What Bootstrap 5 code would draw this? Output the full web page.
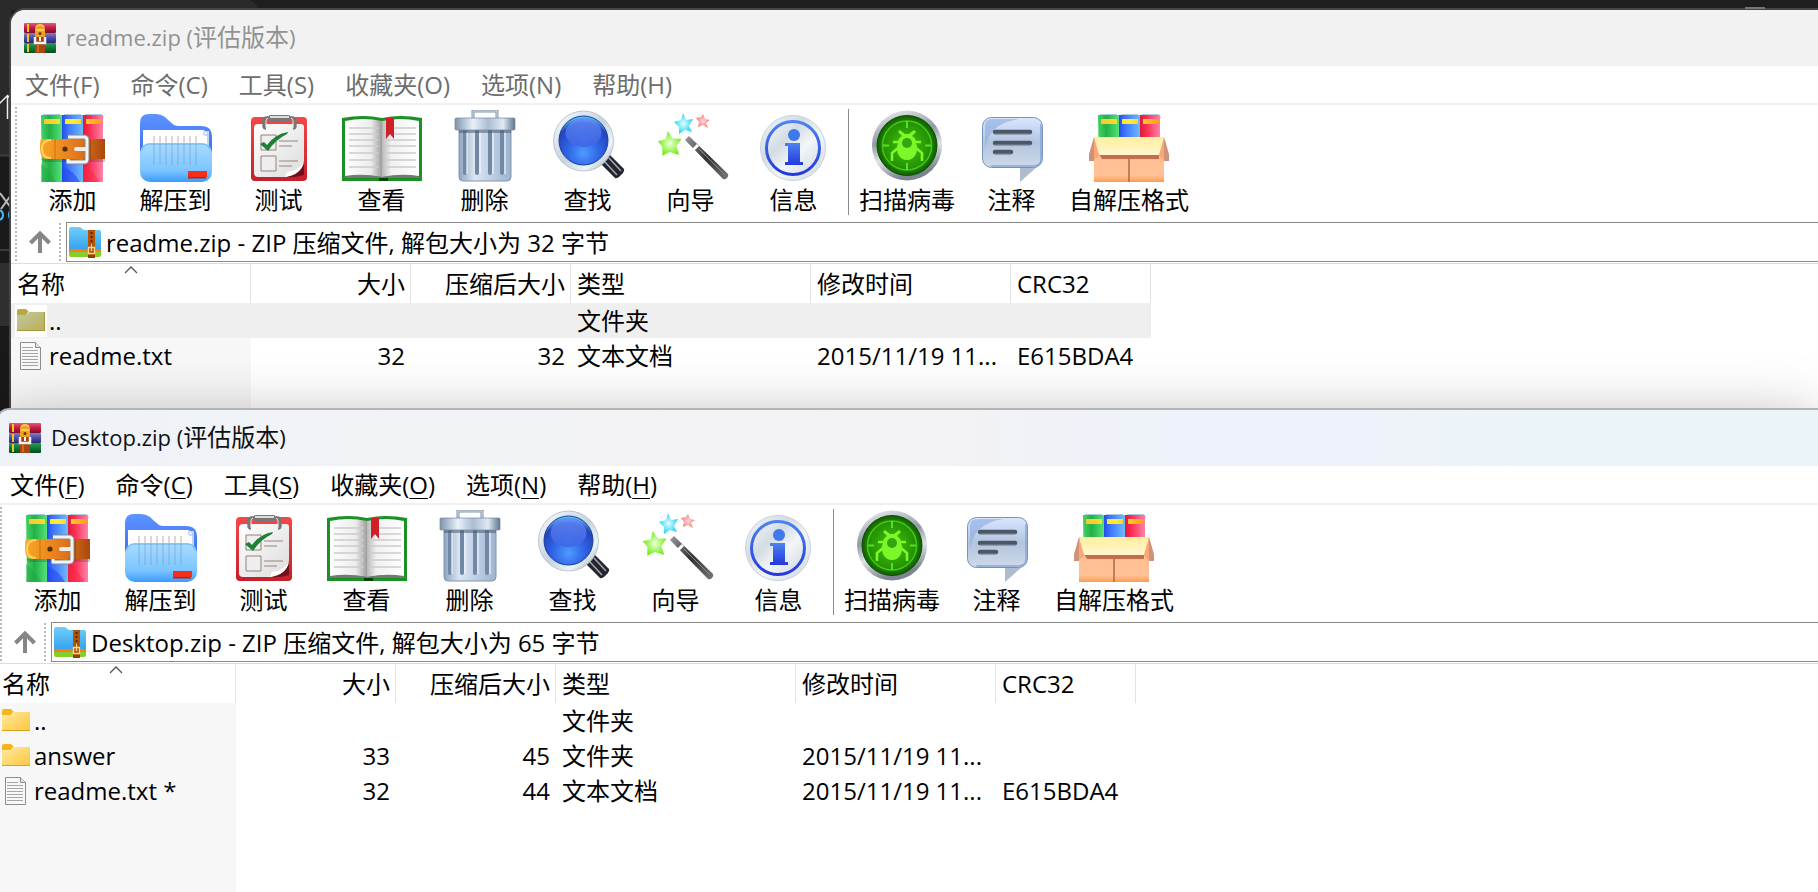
<!DOCTYPE html>
<html lang="zh-CN">
<head>
<meta charset="utf-8">
<meta name="viewport" content="width=device-width, initial-scale=1">
<title>WinRAR</title>
<link rel="stylesheet" href="https://cdn.jsdelivr.net/npm/bootstrap@5.3.0/dist/css/bootstrap.min.css">
<style>
  body { font-family: "Open Sans", "Noto Sans CJK SC", sans-serif; font-size: 24px; line-height: 28px; color: #000; background: #1e1e1e; }
  symbol { overflow: visible; }
  .desktop { padding-top: 8px; background: linear-gradient(90deg, #191919 0, #191919 11px, #1e1e1e 11px); }
  .backdrop { top: 0; left: 0; }
  .minimise { top: 7px; right: 53px; width: 20px; height: 2px; background: #767676; z-index: 3; }

  .win { border: 2px solid #454545; border-right: 0; border-bottom: 0; border-radius: 16px 0 0 0; background: #fff; background-clip: padding-box; overflow: hidden; z-index: 1; }
  .win-back { margin-left: 9px; }
  .win-front { margin-left: -6px; border-color: #b4b4b4; z-index: 2; box-shadow: 0 16px 64px rgba(0,0,0,.36); }

  .titlebar { height: 56px; padding: 0 0 2px 13px; gap: 10px; background: #f2f2f2; color: #929292; }
  .titlebar .latin { font-size: 22px; }
  .win-front .titlebar { color: #111; background: linear-gradient(90deg, #eef2f8 0, #f2f3f6 30%, #f3f2f5 52%, #eef2fa 64%, #eef2fa 76%, #ebf4f8 84%, #ebf4f8 100%); }

  .menubar { height: 39px; padding-left: 14px; gap: 31px; border-bottom: 2px solid #f0f0f0; }
  .menubar button, .tool, .up { border: 0; background: none; padding: 0; color: inherit; }
  .win-back .menubar { color: #6d6d6d; }
  .menubar u { text-underline-offset: 4px; text-decoration-thickness: 1px; }

  .grip { width: 2px; background: repeating-linear-gradient(#fff 0 2px, #b9b9b9 2px 4px); flex: none; }
  .tools { height: 116px; padding-left: 4px; }
  .tool { width: 103px; padding-top: 5px; flex: none; align-self: flex-start; }
  .tool svg { width: 80px; height: 72px; display: block; margin: 0 auto 4px; }
  .tool-scan { width: 106px; }
  .tool-sfx { width: 132px; }
  .rule { width: 1px; height: 106px; margin: 4px 5px 0 3px; background: #8c8c8c; flex: none; }

  .address { height: 43px; padding-left: 4px; border-bottom: 1px solid #dcdcdc; }
  .up { width: 42px; padding-left: 4px; }
  .path { border: 1px solid #8a8a8a; border-right: 0; margin: 1px 0 1px 5px; padding-left: 2px; }
  .path input { border: 0; outline: 0; background: none; padding: 2px 0 0 5px; color: #000; }

  .listing { min-height: 144px; background: linear-gradient(90deg, #f7f7f7 240px, #fff 240px); }
  .files { width: 1140px; table-layout: fixed; border-collapse: separate; border-spacing: 0; }
  .files th { height: 39px; padding: 0 5px 0 6px; font-weight: 400; background: #fff; border-right: 1px solid #e2e2e2; position: relative; }
  .files td { height: 35px; padding: 0 6px; white-space: nowrap; }
  .files .fname { padding-left: 4px; }
  .files .fname svg { width: 32px; height: 32px; margin-right: 2px; flex: none; }
  .files .current td { background: #efefef; }
  .files .current svg { background: #fff; }
  .sort { top: 2px; left: 113px; }
</style>
</head>
<body class="overflow-hidden">

<svg width="0" height="0" class="position-absolute" aria-hidden="true">
  <defs>
    <linearGradient id="gGreen"><stop offset="0" stop-color="#46d267"/><stop offset=".4" stop-color="#23b045"/><stop offset="1" stop-color="#56e27c"/></linearGradient>
    <linearGradient id="gBlue"><stop offset="0" stop-color="#234fe0"/><stop offset=".3" stop-color="#3f76ff"/><stop offset="1" stop-color="#6fbaff"/></linearGradient>
    <linearGradient id="gRed"><stop offset="0" stop-color="#d81c3c"/><stop offset=".3" stop-color="#fb2c50"/><stop offset="1" stop-color="#ff86ab"/></linearGradient>
    <linearGradient id="gBelt"><stop offset="0" stop-color="#f9a825"/><stop offset=".6" stop-color="#e2761b"/><stop offset="1" stop-color="#a8480d"/></linearGradient>
    <linearGradient id="gGold"><stop offset="0" stop-color="#ffc42e"/><stop offset=".5" stop-color="#ffee30"/><stop offset="1" stop-color="#ff9a1f"/></linearGradient>
    <linearGradient id="gFolderBack" x2="0" y2="1"><stop offset="0" stop-color="#5c94ff"/><stop offset="1" stop-color="#2f5fe8"/></linearGradient>
    <linearGradient id="gFolderFront" x2="0" y2="1"><stop offset="0" stop-color="#a9dcff"/><stop offset=".7" stop-color="#7cc5ff"/><stop offset="1" stop-color="#3a9cfa"/></linearGradient>
    <linearGradient id="gPaper" x2="1" y2="1"><stop offset="0" stop-color="#fff"/><stop offset="1" stop-color="#dcdcdc"/></linearGradient>
    <linearGradient id="gBoard" x2="0" y2="1"><stop offset="0" stop-color="#f4484a"/><stop offset="1" stop-color="#c41f2b"/></linearGradient>
    <linearGradient id="gPageL"><stop offset="0" stop-color="#fff"/><stop offset=".7" stop-color="#ececec"/><stop offset="1" stop-color="#9d9d9d"/></linearGradient>
    <linearGradient id="gPageR"><stop offset="0" stop-color="#b9b9b9"/><stop offset=".25" stop-color="#f1f1f1"/><stop offset="1" stop-color="#fff"/></linearGradient>
    <linearGradient id="gSteel"><stop offset="0" stop-color="#7d93ab"/><stop offset=".3" stop-color="#e9f1f9"/><stop offset=".55" stop-color="#a9bdd3"/><stop offset=".8" stop-color="#dfe9f4"/><stop offset="1" stop-color="#5d7591"/></linearGradient>
    <linearGradient id="gBin"><stop offset="0" stop-color="#8fa5bf"/><stop offset=".3" stop-color="#dce6f3"/><stop offset="1" stop-color="#9db3cf"/></linearGradient>
    <linearGradient id="gRing" x2="1" y2="1"><stop offset="0" stop-color="#fbfdff"/><stop offset=".5" stop-color="#c5d3df"/><stop offset=".75" stop-color="#eef4f9"/><stop offset="1" stop-color="#8799ab"/></linearGradient>
    <radialGradient id="gLens" cx=".5" cy=".75" r=".75"><stop offset="0" stop-color="#4d9cff"/><stop offset=".45" stop-color="#2f62e6"/><stop offset=".8" stop-color="#2344bb"/><stop offset="1" stop-color="#66d0ff"/></radialGradient>
    <linearGradient id="gLensTop" x2="0" y2="1"><stop offset="0" stop-color="#6a92ff"/><stop offset="1" stop-color="#3f61e0"/></linearGradient>
    <linearGradient id="gWand" x2="1" y2="1"><stop offset="0" stop-color="#9c9c9c"/><stop offset=".5" stop-color="#303030"/><stop offset="1" stop-color="#777"/></linearGradient>
    <radialGradient id="gStarG"><stop offset="0" stop-color="#f0ffe0"/><stop offset="1" stop-color="#6fee10"/></radialGradient>
    <radialGradient id="gStarC"><stop offset="0" stop-color="#e4feff"/><stop offset="1" stop-color="#22d3f8"/></radialGradient>
    <radialGradient id="gStarP"><stop offset="0" stop-color="#ffd9d9"/><stop offset="1" stop-color="#f57c7c"/></radialGradient>
    <linearGradient id="gInfo" x2="0" y2="1"><stop offset="0" stop-color="#4b83f2"/><stop offset="1" stop-color="#2438dc"/></linearGradient>
    <linearGradient id="gDisc" x2="1" y2="1"><stop offset="0" stop-color="#f5f7f9"/><stop offset=".35" stop-color="#d3dce4"/><stop offset=".6" stop-color="#f3f6f8"/><stop offset="1" stop-color="#cbd5de"/></linearGradient>
    <radialGradient id="gRadar"><stop offset="0" stop-color="#41c40f"/><stop offset=".75" stop-color="#259404"/><stop offset="1" stop-color="#0f5c00"/></radialGradient>
    <linearGradient id="gMetal" x2=".3" y2="1"><stop offset="0" stop-color="#f6f6f7"/><stop offset=".45" stop-color="#9099a4"/><stop offset=".7" stop-color="#dfe3e8"/><stop offset="1" stop-color="#7b848f"/></linearGradient>
    <linearGradient id="gBubble" x2="0" y2="1"><stop offset="0" stop-color="#d9e8ff"/><stop offset=".5" stop-color="#b3c4df"/><stop offset="1" stop-color="#cfdaea"/></linearGradient>
    <linearGradient id="gBox" x2="0" y2="1"><stop offset="0" stop-color="#c8744a"/><stop offset=".25" stop-color="#ffbd92"/><stop offset=".85" stop-color="#ffc296"/><stop offset="1" stop-color="#ff9c50"/></linearGradient>
    <linearGradient id="gFlap" x2="0" y2="1"><stop offset="0" stop-color="#ffef9f"/><stop offset="1" stop-color="#fff6cf"/></linearGradient>
    <linearGradient id="gZip" x2="0" y2="1"><stop offset="0" stop-color="#6fd0f8"/><stop offset="1" stop-color="#36a3ee"/></linearGradient>
    <linearGradient id="gDir" x2="1" y2="1"><stop offset="0" stop-color="#ffe9a2"/><stop offset="1" stop-color="#fcc63c"/></linearGradient>
    <linearGradient id="gDirSel" x2="1" y2="1"><stop offset="0" stop-color="#bfc8a6"/><stop offset="1" stop-color="#bdae50"/></linearGradient>
    <linearGradient id="tRed" x2="0" y2="1"><stop offset="0" stop-color="#e8557c"/><stop offset=".5" stop-color="#c41a3e"/><stop offset="1" stop-color="#7d0f28"/></linearGradient>
    <linearGradient id="tBlue" x2="0" y2="1"><stop offset="0" stop-color="#7f80c9"/><stop offset=".5" stop-color="#4a4aa6"/><stop offset="1" stop-color="#29296e"/></linearGradient>
    <linearGradient id="tGreen" x2="0" y2="1"><stop offset="0" stop-color="#2f9a58"/><stop offset=".5" stop-color="#0d7a36"/><stop offset="1" stop-color="#044a1d"/></linearGradient>

    <symbol id="i-app" viewBox="24 20 32 32">
      <rect x="24" y="22" width="32" height="10" rx="1" fill="url(#tRed)"/><rect x="24" y="32" width="32" height="10" rx="1" fill="url(#tBlue)"/><rect x="24" y="42" width="32" height="10" rx="1" fill="url(#tGreen)"/>
      <path d="M28 23v8M28 33v8M28 43v8" stroke="#f4c51d" stroke-width="2"/>
      <path d="M35 27q1-4 5-4t5 4v9H35z" fill="#eca224"/><path d="M36 25.500q4-3 8 0M36 29h8" fill="none" stroke="#ffd65c" stroke-width="1.500"/><path d="M35 43h10v9H35z" fill="#a94710"/><path d="M38 44v7" stroke="#d2691e" stroke-width="2"/>
      <path d="M35 36v6h10v-6" fill="#a33c18" stroke="#f8f5f0" stroke-width="2.500"/><path d="M40 36v4" stroke="#fff" stroke-width="2"/><circle cx="40" cy="32.500" r="1.500" fill="#6b3510"/>
    </symbol>
    <symbol id="i-books" viewBox="0 0 63 68">
      <path d="M0 1h21v67H1q-1-2 0-4z" fill="url(#gGreen)"/><path d="M21 1h21v67H21z" fill="url(#gBlue)"/><path d="M42 1h20q1 2 0 4v63H42z" fill="url(#gRed)"/>
      <path d="M0 50q10 8 15 18H0z" fill="#1fa842" opacity=".5"/><path d="M21 52q12 5 18 16H21z" fill="#2547ef" opacity=".6"/><path d="M42 52q12 5 16 16H42z" fill="#ff2745" opacity=".5"/>
      <path d="M2 0h17v1H2zM23 0h17v1H23zM44 0h17v1H44z" fill="#2b7bbd" opacity=".4"/>
      <path d="M3 5h16v5H3zM24 5h16v5H24zM45 5h16v5H45z" fill="url(#gGold)"/>
    </symbol>
    <symbol id="i-add" viewBox="33 110 80 72">
      <use href="#i-books" x="41" y="114" width="63" height="68"/>
      <path d="M41 139h64v20H48q-8 0-8-10 0-8 1-10z" fill="url(#gBelt)"/><path d="M51 140q-9 0-9 9t9 9" fill="none" stroke="#ffd263" stroke-width="2"/><path d="M55 139v20" stroke="#cd6e13"/><path d="M88 139v20h3v-20z" fill="#8a3a0b" opacity=".6"/>
      <path d="M41 159h64v3H44z" fill="#333" opacity=".25"/>
      <path d="M68 137h16q3 0 3 3v19q0 3-3 3H68" fill="none" stroke="#888" stroke-width="5"/><path d="M68 137h16q3 0 3 3v19q0 3-3 3H68v-3" fill="none" stroke="#f3f3f3" stroke-width="3"/>
      <path d="M76 149h10" stroke="#eee" stroke-width="4" stroke-linecap="round"/><circle cx="65" cy="149" r="2.6" fill="#5b2c0b"/>
    </symbol>
    <symbol id="i-extract" viewBox="136 110 80 72">
      <path d="M140 172v-49q0-9 9-9h7q5 0 9 3 4 4 9 8 2 1 5 1h22q11 0 11 11v34z" fill="url(#gFolderBack)"/>
      <path d="M202 131h7v20h-7z" fill="#c3d4ef"/><path d="M143 130h61l3 4v20h-64z" fill="#fff"/><path d="M204 130v5h4" fill="none" stroke="#a7b9d8"/>
      <rect x="140" y="143" width="72" height="39" rx="10" fill="url(#gFolderFront)"/><path d="M142 150q1-6 8-6h52q7 0 8 6" fill="none" stroke="#79bdf5" stroke-width="1.5"/>
      <path d="M154 144v21M160 144v21M166 144v21M172 144v21M178 144v21M184 144v21M190 144v21M196 144v21" stroke="#6c8fb5" stroke-width="1.6" opacity=".3"/>
      <path d="M154 136v7M160 136v7M166 136v7M172 136v7M178 136v7M184 136v7M190 136v7M196 136v7" stroke="#b4b4b4"/>
      <path d="M188 171h19v6h-19z" fill="#f32f1a"/><path d="M188 177h18v1.5h-18z" fill="#9e2b2b"/>
    </symbol>
    <symbol id="i-test" viewBox="239 110 80 72">
      <rect x="251" y="117" width="56" height="64" rx="4" fill="url(#gBoard)"/>
      <path d="M258 124h43q3 0 3 3v35q-1 10-17 15h-29q-4 0-4-4v-45q0-4 4-4z" fill="url(#gPaper)"/><path d="M304 161q-3 13-18 16 8 1 18-2z" fill="#741019"/><path d="M304 162q-6 9-17 10l-2 5q16-2 19-15z" fill="#fff"/>
      <path d="M266 128q-2 0-2-2v-5q0-3 3-3h25q3 0 3 3v5q0 2-2 2" fill="none" stroke="#777" stroke-width="3.4"/><path d="M266 128v-7q0-3 3-3h21q3 0 3 3v7" fill="none" stroke="#e2e2e2"/>
      <rect x="268" y="115" width="23" height="6" rx="3" fill="#777"/><path d="M270 117h19" stroke="#ddd" stroke-width="2"/>
      <path d="M261 135h15v15h-15zM261 156h15v15h-15z" fill="#eee" stroke="#95807c"/>
      <path d="M279 141h19M279 146h13M279 161h19M279 166h13" stroke="#98827e"/>
      <path d="M260 144l4-2 3 3q8-11 21-13l-1 2q-12 6-19 17z" fill="#1d8133"/>
    </symbol>
    <symbol id="i-view" viewBox="342 110 80 72">
      <path d="M342 118q22-4 40 0 18-4 40 0v63h-80z" fill="#1b9125"/><path d="M379 178h9v3h-9z" fill="#063d0a"/>
      <path d="M345 121q18-4 37 0v56q-18-3-37 0z" fill="url(#gPageL)"/><path d="M382 121q18-4 37 0v56q-19-3-37 0z" fill="url(#gPageR)"/><path d="M345 176q18-3 37 1 19-4 37-1l1 2h-76z" fill="#777"/>
      <path d="M349 128h30M349 134h30M349 140h30M349 146h30M349 153h30M349 160h30M349 167h30M386 128h30M386 134h30M386 140h30M386 146h30M386 153h30M386 160h30M386 167h30" stroke="#cbcbcb" stroke-width="1.6"/>
      <path d="M386 118h8v21l-4-5-4 5z" fill="#cf1f27"/>
    </symbol>
    <symbol id="i-delete" viewBox="445 110 80 72">
      <path d="M473 119v-8h24v8" fill="none" stroke="#8296ac" stroke-width="3"/><path d="M473 119v-8h24v8" fill="none" stroke="#d6e1ec" stroke-width="1"/>
      <path d="M459 129h52v48q0 4-4 4h-44q-4 0-4-4z" fill="url(#gBin)" stroke="#8196af"/>
      <path d="M465 131v42M477 131v42M490 131v42M502 131v42" stroke="#7189a5" stroke-width="4" stroke-linecap="round"/><path d="M467 132v42M480 132v42M493 132v42M505 132v42" stroke="#f1f6fd" stroke-width="1.2"/>
      <path d="M459 129h52v4h-52z" fill="#3f5267" opacity=".5"/><rect x="455" y="118" width="60" height="12" rx="1" fill="url(#gSteel)" stroke="#73879e" stroke-width=".7"/>
    </symbol>
    <symbol id="i-find" viewBox="548 110 80 72">
      <path d="M603 160l6-6 15 15q1 2-3 6t-6 3l-14-14z" fill="#23252c"/><path d="M605 162l12 13M609 158l12 13" stroke="#9fa4b0" stroke-width="1.6"/>
      <circle cx="583.500" cy="141" r="30" fill="url(#gRing)" stroke="#a0b2c2" stroke-width=".7"/><circle cx="583.500" cy="140.500" r="24.500" fill="url(#gLens)" stroke="#1b3e99"/><ellipse cx="583.500" cy="133" rx="18" ry="14" fill="url(#gLensTop)" opacity=".75"/>
    </symbol>
    <symbol id="i-wizard" viewBox="651 110 80 72">
      <path d="M669 131l4 8 9 1-6 7 2 9-9-4-8 3 1-9-4-6 8-1z" fill="url(#gStarG)" transform="rotate(-6 669 143)"/>
      <path d="M683 113l3 7 7-1-4 7 3 6-7-2-6 4v-7l-5-5 7-2z" fill="url(#gStarC)"/><path d="M703 114l2 5 5 1-4 3 2 5-5-3-5 2 1-5-3-4 5-1z" fill="url(#gStarP)"/>
      <path d="M685 140l4-4 39 38q1 2-1 4t-4 1z" fill="url(#gWand)"/><path d="M693 150l5-5" stroke="#fff" stroke-width="3"/><path d="M699 149l26 26" stroke="#8c8c8c"/>
    </symbol>
    <symbol id="i-info" viewBox="754 110 80 72">
      <circle cx="793" cy="148" r="32.500" fill="url(#gDisc)" stroke="#c6d2dc"/><circle cx="793" cy="148" r="26.500" fill="url(#gDisc)" stroke="url(#gInfo)" stroke-width="3"/>
      <circle cx="794" cy="135" r="6" fill="#3f77ed"/><path d="M785 143h15v19h3v3h-18v-3h3v-16h-3z" fill="url(#gInfo)"/>
    </symbol>
    <symbol id="i-scan" viewBox="867 110 80 72">
      <circle cx="907" cy="145.500" r="35" fill="url(#gMetal)"/><circle cx="907" cy="145.500" r="30" fill="url(#gRadar)" stroke="#0e5002"/>
      <circle cx="907" cy="145.500" r="24.500" fill="none" stroke="#47c71c" stroke-width="1.500"/><path d="M907 121v7M907 163v7M883 145.500h6M925 145.500h6" stroke="#53e120" stroke-width="2"/>
      <path d="M898 143q0-5 4-7l-4-4 2-2 5 4h4l5-4 2 2-4 4q4 2 4 7 2 5 0 11-3 6-9 6t-9-6q-2-6 0-11z" fill="#7bf82a"/><circle cx="907" cy="143" r="5" fill="#34a60e"/>
      <path d="M899 142h-6M915 142h6M898 148l-6 5v8M916 148l6 5v8" fill="none" stroke="#7bf82a" stroke-width="2.600"/>
    </symbol>
    <symbol id="i-comment" viewBox="972 110 80 72">
      <path d="M1020 166h18l-18 16z" fill="#aebccd"/>
      <rect x="982.500" y="117.500" width="60" height="50" rx="9" fill="url(#gBubble)" stroke="#7593c1"/><path d="M985 150q3-27 34-31H992q-7 0-7 7z" fill="#8daee0" opacity=".65"/><path d="M1041 124v35q0 7-8 7h-42" fill="none" stroke="#86a7d8" stroke-width="1.500"/>
      <path d="M995 132h35M995 143h35M995 152h16" stroke="#4c5669" stroke-width="4.500" stroke-linecap="round"/><path d="M995 134h35M995 145h35M995 154h16" stroke="#818b9c" stroke-linecap="round"/>
    </symbol>
    <symbol id="i-sfx" viewBox="1089 110 80 72">
      <use href="#i-books" x="1098" y="114" width="63" height="68"/>
      <path d="M1094 137l-7 24h7zM1164 137l7 24h-7z" fill="#cd9278"/><path d="M1094 137h70v45h-70z" fill="url(#gBox)"/><path d="M1094 137l6 18-6 5zM1164 137l-6 18 6 5z" fill="#fba674"/><path d="M1129 156v26" stroke="#ad694a" stroke-width="1.500"/>
      <path d="M1099 154h60v5h-57z" fill="#c46e4c"/><path d="M1094 137h70l-5 18h-60z" fill="url(#gFlap)"/>
    </symbol>
    <symbol id="i-up" viewBox="0 0 22 22"><path d="M11 22V3M1.500 12L11 2.500 20.500 12" fill="none" stroke="#868686" stroke-width="4"/></symbol>
    <symbol id="i-zip" viewBox="0 0 32 32">
      <path d="M0 24h32v5q0 2-2 2H2q-2 0-2-2z" fill="#85cf2b"/><path d="M0 21h32v5H0z" fill="#ff7a12"/><path d="M0 3q0-2 2-2h9l4 3h15q2 0 2 2v17H0z" fill="url(#gZip)"/>
      <path d="M19 4h7v27h-7z" fill="#b55307"/><path d="M22.500 6v14" stroke="#54260a" stroke-width="2" stroke-dasharray="2 2"/><path d="M19.500 21.500h6v6h-6zM22.500 18v7" fill="none" stroke="#fbd98c" stroke-width="1.300"/><path d="M19 29h7v3h-7z" fill="#8e3e06"/>
    </symbol>
    <symbol id="i-dir" viewBox="0 0 32 32">
      <path d="M2 6q0-2 2-2h7l3 3h-1l-2 3H2z" fill="#f7b51c"/><path d="M2 10h9l3-3h16v19H2z" fill="url(#gDir)"/><path d="M2 25.500h28" stroke="#dfa21c"/>
    </symbol>
    <symbol id="i-dir-sel" viewBox="0 0 32 32">
      <path d="M2 6q0-2 2-2h7l3 3h-1l-2 3H2z" fill="#b9a840"/><path d="M2 10h9l3-3h16v19H2z" fill="url(#gDirSel)"/><path d="M2 25.500h28M29.500 7v19" stroke="#a8983c"/>
    </symbol>
    <symbol id="i-txt" viewBox="0 0 32 32">
      <path d="M5.500 2.500h15l5 5v22h-20z" fill="#f8f8f8" stroke="#8d8d8d"/><path d="M20.500 2.500v5h5" fill="#e4e4e4" stroke="#8d8d8d"/><path d="M7 7.500h11M7 10.500h16M7 13.500h16M7 16.500h16M7 19.500h16M7 22.500h16M7 25.500h16" stroke="#a6a6a6"/>
    </symbol>
    <symbol id="i-sort" viewBox="0 0 14 8"><path d="M1 7l6-6 6 6" fill="none" stroke="#555" stroke-width="1.300"/></symbol>
  </defs>
</svg>

<main class="desktop position-relative d-flex flex-column min-vh-100">
  <svg class="backdrop position-absolute" width="280" height="420" aria-hidden="true">
    <path d="M0 0h248q8 1 10 10H11v145H0z" fill="#2a2a2a"/><path d="M0 155.500h11M0 250h11" stroke="#3c3c3c" stroke-width="2"/><path d="M0 263h11v63H0z" fill="#2f2f2f"/>
    <path d="M7.500 119V96M-1 104l8.500-8.500L13 101" fill="none" stroke="#eee" stroke-width="1.500"/>
    <path d="M0 193l11 15M11 195L1 209" stroke="#bbb" stroke-width="2"/><path d="M-1 210q4 1 4 5t-4 5M12 210q-3 1-3 5t3 5" fill="none" stroke="#4db4ea" stroke-width="2"/>
  </svg>
  <span class="minimise position-absolute"></span>

  <section class="win win-back position-relative d-flex flex-column" aria-label="readme.zip">
    <header class="titlebar d-flex align-items-center">
      <svg width="32" height="32"><use href="#i-app"/></svg>
      <span><span class="latin">readme.zip (</span>评估版本<span class="latin">)</span></span>
    </header>
    <nav class="menubar d-flex align-items-center">
      <button type="button">文件(F)</button><button type="button">命令(C)</button><button type="button">工具(S)</button><button type="button">收藏夹(O)</button><button type="button">选项(N)</button><button type="button">帮助(H)</button>
    </nav>
    <div class="tools d-flex">
      <span class="grip me-1"></span>
      <button type="button" class="tool"><svg><use href="#i-add"/></svg>添加</button>
      <button type="button" class="tool"><svg><use href="#i-extract"/></svg>解压到</button>
      <button type="button" class="tool"><svg><use href="#i-test"/></svg>测试</button>
      <button type="button" class="tool"><svg><use href="#i-view"/></svg>查看</button>
      <button type="button" class="tool"><svg><use href="#i-delete"/></svg>删除</button>
      <button type="button" class="tool"><svg><use href="#i-find"/></svg>查找</button>
      <button type="button" class="tool"><svg><use href="#i-wizard"/></svg>向导</button>
      <button type="button" class="tool"><svg><use href="#i-info"/></svg>信息</button>
      <span class="rule"></span>
      <button type="button" class="tool tool-scan"><svg><use href="#i-scan"/></svg>扫描病毒</button>
      <button type="button" class="tool"><svg><use href="#i-comment"/></svg>注释</button>
      <button type="button" class="tool tool-sfx"><svg><use href="#i-sfx"/></svg>自解压格式</button>
    </div>
    <div class="address d-flex">
      <span class="grip"></span>
      <button type="button" class="up d-flex align-items-center justify-content-center" aria-label="向上"><svg width="22" height="22"><use href="#i-up"/></svg></button>
      <span class="grip"></span>
      <div class="path d-flex align-items-center flex-grow-1">
        <svg width="32" height="32"><use href="#i-zip"/></svg>
        <input type="text" class="flex-grow-1" aria-label="路径" value="readme.zip - ZIP 压缩文件, 解包大小为 32 字节">
      </div>
    </div>
    <div class="listing flex-grow-1">
      <table class="files">
        <colgroup><col width="240"><col width="160"><col width="160"><col width="240"><col width="200"><col width="140"></colgroup>
        <thead><tr><th>名称<svg class="sort position-absolute" width="14" height="8"><use href="#i-sort"/></svg></th><th class="text-end">大小</th><th class="text-end">压缩后大小</th><th>类型</th><th>修改时间</th><th>CRC32</th></tr></thead>
        <tbody>
          <tr class="current"><td class="fname"><div class="d-flex align-items-center"><svg><use href="#i-dir-sel"/></svg>..</div></td><td></td><td></td><td>文件夹</td><td></td><td></td></tr>
          <tr><td class="fname"><div class="d-flex align-items-center"><svg><use href="#i-txt"/></svg>readme.txt</div></td><td class="text-end">32</td><td class="text-end">32</td><td>文本文档</td><td>2015/11/19 11...</td><td>E615BDA4</td></tr>
        </tbody>
      </table>
    </div>
  </section>

  <section class="win win-front position-relative d-flex flex-column flex-grow-1" aria-label="Desktop.zip">
    <header class="titlebar d-flex align-items-center">
      <svg width="32" height="32"><use href="#i-app"/></svg>
      <span><span class="latin">Desktop.zip (</span>评估版本<span class="latin">)</span></span>
    </header>
    <nav class="menubar d-flex align-items-center">
      <button type="button">文件(<u>F</u>)</button><button type="button">命令(<u>C</u>)</button><button type="button">工具(<u>S</u>)</button><button type="button">收藏夹(<u>O</u>)</button><button type="button">选项(<u>N</u>)</button><button type="button">帮助(<u>H</u>)</button>
    </nav>
    <div class="tools d-flex">
      <span class="grip me-1"></span>
      <button type="button" class="tool"><svg><use href="#i-add"/></svg>添加</button>
      <button type="button" class="tool"><svg><use href="#i-extract"/></svg>解压到</button>
      <button type="button" class="tool"><svg><use href="#i-test"/></svg>测试</button>
      <button type="button" class="tool"><svg><use href="#i-view"/></svg>查看</button>
      <button type="button" class="tool"><svg><use href="#i-delete"/></svg>删除</button>
      <button type="button" class="tool"><svg><use href="#i-find"/></svg>查找</button>
      <button type="button" class="tool"><svg><use href="#i-wizard"/></svg>向导</button>
      <button type="button" class="tool"><svg><use href="#i-info"/></svg>信息</button>
      <span class="rule"></span>
      <button type="button" class="tool tool-scan"><svg><use href="#i-scan"/></svg>扫描病毒</button>
      <button type="button" class="tool"><svg><use href="#i-comment"/></svg>注释</button>
      <button type="button" class="tool tool-sfx"><svg><use href="#i-sfx"/></svg>自解压格式</button>
    </div>
    <div class="address d-flex">
      <span class="grip"></span>
      <button type="button" class="up d-flex align-items-center justify-content-center" aria-label="向上"><svg width="22" height="22"><use href="#i-up"/></svg></button>
      <span class="grip"></span>
      <div class="path d-flex align-items-center flex-grow-1">
        <svg width="32" height="32"><use href="#i-zip"/></svg>
        <input type="text" class="flex-grow-1" aria-label="路径" value="Desktop.zip - ZIP 压缩文件, 解包大小为 65 字节">
      </div>
    </div>
    <div class="listing flex-grow-1">
      <table class="files">
        <colgroup><col width="240"><col width="160"><col width="160"><col width="240"><col width="200"><col width="140"></colgroup>
        <thead><tr><th>名称<svg class="sort position-absolute" width="14" height="8"><use href="#i-sort"/></svg></th><th class="text-end">大小</th><th class="text-end">压缩后大小</th><th>类型</th><th>修改时间</th><th>CRC32</th></tr></thead>
        <tbody>
          <tr><td class="fname"><div class="d-flex align-items-center"><svg><use href="#i-dir"/></svg>..</div></td><td></td><td></td><td>文件夹</td><td></td><td></td></tr>
          <tr><td class="fname"><div class="d-flex align-items-center"><svg><use href="#i-dir"/></svg>answer</div></td><td class="text-end">33</td><td class="text-end">45</td><td>文件夹</td><td>2015/11/19 11...</td><td></td></tr>
          <tr><td class="fname"><div class="d-flex align-items-center"><svg><use href="#i-txt"/></svg>readme.txt *</div></td><td class="text-end">32</td><td class="text-end">44</td><td>文本文档</td><td>2015/11/19 11...</td><td>E615BDA4</td></tr>
        </tbody>
      </table>
    </div>
  </section>
</main>
<script src="https://cdn.jsdelivr.net/npm/bootstrap@5.3.0/dist/js/bootstrap.bundle.min.js"></script>
</body>
</html>
